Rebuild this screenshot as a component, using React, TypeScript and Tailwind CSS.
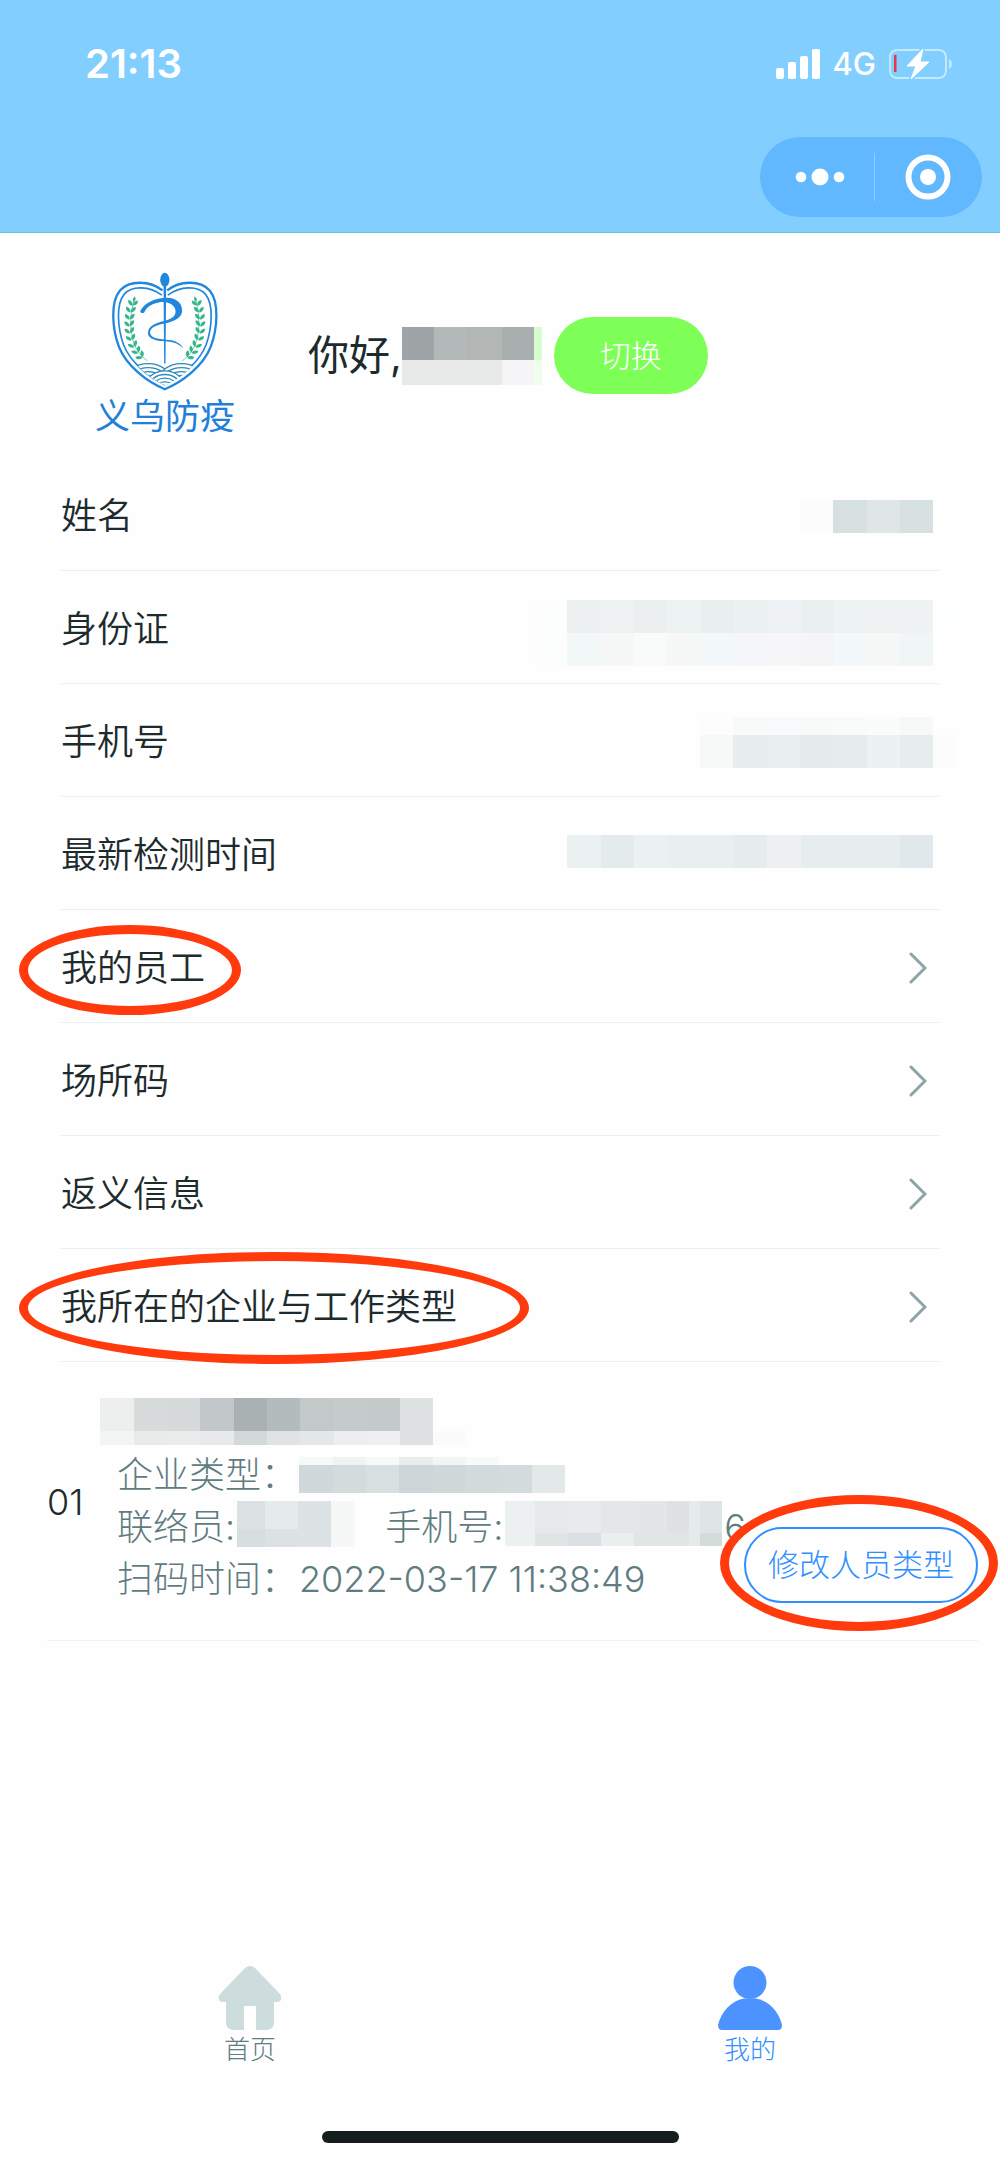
import { ReactNode } from "react"

type MosaicRowType = {
  height: string,
  cells: string[],
}

type InfoItemType = {
  label: string,
  value: MosaicRowType[],
}

type LinkItemType = {
  label: string,
  href: string,
  circle?: string,
}

// each cell is "width color" so that uneven blocks can be written too
const greetingMosaic: MosaicRowType[] = [
  { height: "h-[33px]", cells: ["w-8 bg-[#9fa5a6]", "w-8 bg-[#b3b9b9]", "w-9 bg-[#b2b7b6]", "w-8 bg-[#a9aeaf]", "w-2 bg-[#d7fcd0]"] },
  { height: "h-[25px]", cells: ["w-8 bg-[#e7e8e8]", "w-8 bg-[#e8e9e9]", "w-9 bg-[#e8e9e9]", "w-8 bg-[#f5f5f7]", "w-2 bg-[#efffec]"] },
]

const infoItems: InfoItemType[] = [
  {
    label: "姓名",
    value: [
      { height: "h-[33px]", cells: ["w-[33px] bg-[#fcfcfc]", "w-[34px] bg-[#d7e0e1]", "w-[33px] bg-[#dfe6e5]", "w-[33px] bg-[#d8e1e2]", "w-[33px] bg-[#fdfefd]"] },
    ],
  },
  {
    label: "身份证",
    value: [
      { height: "h-2", cells: ["w-[33px] bg-white", "w-[366px] bg-[#fefefe]", "w-[33px] bg-white"] },
      { height: "h-[33px]", cells: ["w-[33px] bg-[#fcfefd]", "w-[34px] bg-[#ecf0f1]", "w-[33px] bg-[#eef2f2]", "w-[33px] bg-[#ebeff0]", "w-[34px] bg-[#edf2f2]", "w-[33px] bg-[#e9efef]", "w-[33px] bg-[#ebf1f1]", "w-[34px] bg-[#eff2f4]", "w-[33px] bg-[#eaf0f0]", "w-[33px] bg-[#edf2f3]", "w-[33px] bg-[#eff2f3]", "w-[33px] bg-[#eef2f3]", "w-[33px] bg-[#fdfefe]"] },
      { height: "h-[33px]", cells: ["w-[33px] bg-[#fcfefd]", "w-[34px] bg-[#f2f7f8]", "w-[33px] bg-[#f6f8f7]", "w-[33px] bg-[#f9fbfa]", "w-[34px] bg-[#f6f8f7]", "w-[33px] bg-[#f3f8fa]", "w-[33px] bg-[#f5f6f9]", "w-[34px] bg-[#f7f7fa]", "w-[33px] bg-[#f5f5f8]", "w-[33px] bg-[#f3f8fa]", "w-[33px] bg-[#f6f8f8]", "w-[33px] bg-[#f0f5f6]", "w-[33px] bg-[#fefefe]"] },
    ],
  },
  {
    label: "手机号",
    value: [
      { height: "h-[18px]", cells: ["w-[33px] bg-[#fdfdfd]", "w-[34px] bg-[#f8faf9]", "w-[33px] bg-[#f9fafd]", "w-[33px] bg-[#f8f9f9]", "w-[34px] bg-[#f9fbfa]", "w-[33px] bg-[#fafcfb]", "w-[33px] bg-[#f7f9f8]", "w-[33px] bg-[#fefefe]"] },
      { height: "h-[33px]", cells: ["w-[33px] bg-[#f7f9f8]", "w-[34px] bg-[#e7eded]", "w-[33px] bg-[#e9eeee]", "w-[33px] bg-[#e5ebeb]", "w-[34px] bg-[#e6ecec]", "w-[33px] bg-[#ecf1f2]", "w-[33px] bg-[#e7eded]", "w-[22px] bg-[#fafdfc]", "w-[11px] bg-[#fefefe]"] },
    ],
  },
  {
    label: "最新检测时间",
    value: [
      { height: "h-[33px]", cells: ["w-[34px] bg-[#ebf1f1]", "w-[33px] bg-[#e3ecea]", "w-[33px] bg-[#ebf1f1]", "w-[34px] bg-[#e9efef]", "w-[33px] bg-[#e9efef]", "w-[33px] bg-[#e6eced]", "w-[34px] bg-[#edf1f2]", "w-[33px] bg-[#e7edee]", "w-[33px] bg-[#e6edec]", "w-[33px] bg-[#e7edee]", "w-[33px] bg-[#e0e8eb]", "w-[33px] bg-[#fefefe]"] },
      { height: "h-2", cells: ["w-[366px] bg-[#fefefe]", "w-[33px] bg-[#fefefe]"] },
    ],
  },
]

const linkItems: LinkItemType[] = [
  { label: "我的员工", href: "#staff", circle: "-left-[42px] -right-9 -top-4 -bottom-5" },
  { label: "场所码", href: "#place" },
  { label: "返义信息", href: "#return" },
  { label: "我所在的企业与工作类型", href: "#company", circle: "-left-[42px] -right-[72px] -top-7 -bottom-[30px]" },
]

const companyMosaic: MosaicRowType[] = [
  { height: "h-[33px]", cells: ["w-[34px] bg-[#edefee]", "w-[33px] bg-[#d8dbdb]", "w-[33px] bg-[#d5d9d9]", "w-[34px] bg-[#c2c8ca]", "w-[33px] bg-[#a9b1b3]", "w-[33px] bg-[#b3bbbd]", "w-[34px] bg-[#c2c9c8]", "w-[33px] bg-[#c4cbca]", "w-[33px] bg-[#c3cac9]", "w-[33px] bg-[#dee2e3]"] },
  { height: "h-[14px]", cells: ["w-[34px] bg-[#f3f4f4]", "w-[33px] bg-[#e9ebeb]", "w-[33px] bg-[#eaebeb]", "w-[34px] bg-[#e7e9ea]", "w-[33px] bg-[#d3d8d9]", "w-[33px] bg-[#dfe3e4]", "w-[34px] bg-[#e3e7e7]", "w-[33px] bg-[#eceeef]", "w-[33px] bg-[#eff0f1]", "w-[33px] bg-[#dee2e3]", "w-[33px] bg-[#fafbfb]"] },
]

const typeMosaic: MosaicRowType[] = [
  { height: "h-2", cells: ["w-[34px] bg-[#f7f8f8]", "w-[33px] bg-[#f1f3f3]", "w-[33px] bg-[#f7f8f8]", "w-[34px] bg-[#e9edee]", "w-[33px] bg-[#f3f5f5]", "w-[33px] bg-[#f8f9f9]"] },
  { height: "h-7", cells: ["w-[34px] bg-[#cfd8da]", "w-[33px] bg-[#d3dbdc]", "w-[33px] bg-[#d8dfe0]", "w-[34px] bg-[#cdd7d9]", "w-[33px] bg-[#d0d9da]", "w-[33px] bg-[#d2dadb]", "w-[33px] bg-[#d3dbdd]", "w-[33px] bg-[#e3e8e8]"] },
]

const contactMosaic: MosaicRowType[] = [
  { height: "h-7", cells: ["w-7 bg-[#dce2e4]", "w-[33px] bg-[#e5eaea]", "w-[33px] bg-[#dde3e5]", "w-6 bg-[#f6f8f8]"] },
  { height: "h-[18px]", cells: ["w-7 bg-[#d7dee0]", "w-[33px] bg-[#dce2e4]", "w-[33px] bg-[#dde3e5]", "w-6 bg-[#f6f8f8]"] },
]

const phoneMosaic: MosaicRowType[] = [
  { height: "h-8", cells: ["w-[30px] bg-[#edf0f1]", "w-[33px] bg-[#e5e9ea]", "w-[33px] bg-[#e7ebeb]", "w-[33px] bg-[#e3e7e8]", "w-[33px] bg-[#e2e6e7]", "w-[22px] bg-[#dee2e5]", "w-[11px] bg-[#e7eaeb]", "w-[22px] bg-[#dfe5e5]"] },
  { height: "h-[13px]", cells: ["w-[30px] bg-[#edf0f1]", "w-[33px] bg-[#dfe4e4]", "w-[33px] bg-[#dbe0e3]", "w-[33px] bg-[#e9eeee]", "w-[33px] bg-[#e0e5e5]", "w-[22px] bg-[#e0e5e5]", "w-[11px] bg-[#e7eaeb]", "w-[22px] bg-[#d3dbdb]"] },
]

const Mosaic = ({ rows, className = "" }: { rows: MosaicRowType[], className?: string }) => {
  return (
    <div className={`shrink-0 ${className}`} aria-hidden="true">
      {rows.map((row, i) => (
        <div key={i} className={`flex ${row.height}`}>
          {row.cells.map((cell, j) => (
            <div key={j} className={`shrink-0 ${cell}`} />
          ))}
        </div>
      ))}
    </div>
  )
}

const Circle = ({ position }: { position: string }) => {
  return <span className={`pointer-events-none absolute rounded-[50%] border-[9px] border-[#ff3a0c] ${position}`} />
}

const StatusBar = () => {
  return (
    <div className="flex items-center justify-between pl-[85px] pr-[46px] pt-10 text-white">
      <time className="text-[40px] leading-12 font-semibold">21:13</time>
      <div className="flex items-center">
        <svg className="w-11 h-[30px]" viewBox="0 0 44 30" fill="currentColor">
          <rect x="0" y="19" width="8" height="11" rx="2" />
          <rect x="12" y="13" width="8" height="17" rx="2" />
          <rect x="24" y="7" width="8" height="23" rx="2" />
          <rect x="36" y="0" width="8" height="30" rx="2" />
        </svg>
        <span className="ml-3 text-[31px] leading-10 font-medium">4G</span>
        <svg className="ml-3 w-[66px] h-8" viewBox="0 0 66 32" fill="none">
          <rect x="2" y="2" width="56" height="28" rx="7" stroke="#bfeaff" strokeWidth="2" />
          <path d="M61 11c4 1.500 4 8.500 0 10z" fill="#bfeaff" />
          <rect x="6" y="7" width="2.500" height="17" fill="#f0323c" />
          <path d="M35 1 19 18h9l-5 13 18-17h-9l3-13z" fill="#82cfff" stroke="#82cfff" strokeWidth="4" strokeLinejoin="round" />
          <path d="M35 1 19 18h9l-5 13 18-17h-9l3-13z" fill="#fff" stroke="#fff" strokeWidth="1" strokeLinejoin="round" />
        </svg>
      </div>
    </div>
  )
}

const Capsule = () => {
  return (
    <div className="mt-[49px] mr-[18px] ml-auto flex h-20 w-[222px] items-center rounded-full bg-[#61b8ff]">
      <button type="button" aria-label="更多" className="flex flex-1 items-center justify-center pl-1.5">
        <svg className="w-[50px] h-[18px]" viewBox="0 0 50 18" fill="#fff">
          <circle cx="6" cy="9" r="5.300" />
          <circle cx="25" cy="9" r="8.500" />
          <circle cx="44" cy="9" r="5.300" />
        </svg>
      </button>
      <span className="h-12 w-px bg-[#8fceff]" />
      <button type="button" aria-label="关闭" className="flex flex-1 items-center justify-center">
        <svg className="w-[46px] h-[46px]" viewBox="0 0 46 46" fill="none">
          <circle cx="23" cy="23" r="19.500" stroke="#fff" strokeWidth="6" />
          <circle cx="23" cy="23" r="8" fill="#fff" />
        </svg>
      </button>
    </div>
  )
}

// leaf pairs along the left branch: x, y, rotation
const leaves = [
  [215, 160, 12],
  [209, 180, 8],
  [206, 201, 4],
  [205, 222, 0],
  [206, 243, -6],
  [210, 264, -12],
  [217, 285, -20],
  [228, 303, -30],
  [240, 318, -42],
]

const Branch = () => {
  return (
    <g>
      <path d="M221 142C204 200 198 290 260 332" stroke="#35b58a" strokeWidth="2" fill="none" />
      {leaves.map(([x, y, r], i) => (
        <g key={i} transform={`translate(${x} ${y}) rotate(${r})`} fill="#35b58a">
          <path d="M0 7C-14 5-16-5-14-9C-6-8 1-3 0 7z" />
          <path d="M1 5C0-5 6-11 14-12C16-3 11 4 1 5z" />
        </g>
      ))}
      <path d="M217 154C214 146 217 141 222 138C226 146 224 151 217 154z" fill="#35b58a" />
    </g>
  )
}

const HalfShield = () => {
  return (
    <g fill="none" stroke="#2187dc">
      <path d="M305 120C268 90 206 88 177 120C147 156 154 236 174 290C196 346 258 396 314 418" strokeWidth="7" />
      <path d="M303 134C266 107 214 104 190 131C164 162 170 234 188 284C208 334 262 382 314 404" strokeWidth="5" />
    </g>
  )
}

const Logo = () => {
  return (
    <svg className="w-[108px] h-[121px]" viewBox="150 62 325 363" role="img" aria-label="义乌防疫">
      <defs>
        <clipPath id="shield">
          <path d="M170 200C172 234 178 260 188 284C208 334 262 382 314 404C368 382 416 334 436 284C446 260 452 234 454 200z" />
        </clipPath>
      </defs>
      <HalfShield />
      <g transform="translate(624 0) scale(-1 1)">
        <HalfShield />
      </g>
      <Branch />
      <g transform="translate(624 0) scale(-1 1)">
        <Branch />
      </g>
      <g clipPath="url(#shield)" stroke="#2c8cb8" strokeWidth="4">
        {[262, 362].map((cx) => (
          [58, 46, 34, 22].map((r) => (
            <ellipse key={`${cx}-${r}`} cx={cx} cy="394" rx={r + 12} ry={r - 4} fill="#fff" />
          ))
        ))}
        {[54, 43, 32, 21, 10].map((r) => (
          <ellipse key={r} cx="312" cy="410" rx={r + 4} ry={r - 6} fill="#fff" />
        ))}
      </g>
      <ellipse cx="312" cy="88" rx="14" ry="21" fill="#2187dc" />
      <path d="M308 100h8l-2 240h-4z" fill="#2187dc" />
      <path
        d="M238 182C250 158 282 142 318 142C352 142 366 164 364 184C360 208 330 216 300 222C272 229 266 240 268 250C274 268 312 266 332 270C350 274 362 284 368 294C352 280 342 276 326 274C298 272 264 272 261 248C262 224 288 218 312 211C334 205 346 196 344 180C341 160 316 152 294 156C268 161 256 172 250 186C244 190 238 188 238 182z"
        fill="#2187dc"
      />
    </svg>
  )
}

const Field = ({ children }: { children: ReactNode }) => {
  return <div className="flex h-[52px] items-center gap-0.5 pl-[17px] text-[36px] font-light whitespace-nowrap text-[#5f7c80]">{children}</div>
}

const App = () => {
  return (
    <div className="flex min-h-screen flex-col bg-[#fefefe] font-['Inter','Noto_Sans_CJK_SC',sans-serif] text-[#1d2b2d]">
      <header className="border-b border-[#74bdd8] bg-[#82cfff] pb-[15px]">
        <StatusBar />
        <Capsule />
      </header>

      <main>
        <section className="flex items-center pt-[38px] pb-[18px] pl-[95px]">
          <div className="flex flex-col items-center">
            <Logo />
            <p className="text-[35px] leading-12 text-[#2280d8]">义乌防疫</p>
          </div>
          <h1 className="ml-[73px] text-[41px]">你好,</h1>
          <Mosaic rows={greetingMosaic} />
          <button type="button" className="ml-3 rounded-full bg-[#7eff57] px-[46px] py-[15px] text-[31px] leading-[47px] font-light text-white">
            切换
          </button>
        </section>

        <section className="mx-[61px] text-[36px] leading-[54px] font-[350]">
          {infoItems.map((item) => (
            <div key={item.label} className="flex h-[113px] items-center justify-between border-b border-[#e8f0f2] pt-1">
              <span>{item.label}</span>
              {/* faint edge of the block runs past the divider */}
              <div className="-mr-[27px]">
                <Mosaic rows={item.value} />
              </div>
            </div>
          ))}
          {linkItems.map((item) => (
            <a key={item.label} href={item.href} className="flex h-[113px] items-center justify-between border-b border-[#e8f0f2] pt-1">
              <span className="relative">
                {item.label}
                {item.circle && <Circle position={item.circle} />}
              </span>
              <svg className="mr-3 w-[18px] h-8" viewBox="0 0 18 32" fill="none" stroke="#8aa5a8" strokeWidth="3" strokeLinecap="round">
                <path d="M2 2l14 14L2 30" />
              </svg>
            </a>
          ))}
        </section>

        <section className="mr-[22px] ml-[47px] flex items-center border-b border-[#eef4f4] pt-9 pb-[35px]">
          <span className="w-[53px] text-[36px] font-light">01</span>
          <div className="min-w-0 flex-1">
            <Mosaic rows={companyMosaic} />
            <div className="mt-1">
              <Field>
                企业类型：
                <Mosaic rows={typeMosaic} />
              </Field>
              <Field>
                联络员:
                <Mosaic rows={contactMosaic} className="self-start" />
                <span className="ml-7">手机号:</span>
                <Mosaic rows={phoneMosaic} className="self-start" />
                6
              </Field>
              <Field>
                扫码时间：
                <time>2022-03-17 11:38:49</time>
              </Field>
            </div>
          </div>
          <div className="relative mb-0.5 shrink-0 self-end">
            <button type="button" className="block rounded-full border-2 border-[#2f8fff] px-[22px] py-3 text-[31px] leading-12 font-light text-[#2f8fff]">
              修改人员类型
            </button>
            <Circle position="-left-6 -right-5 -top-8 -bottom-7" />
          </div>
        </section>
      </main>

      <nav className="mt-auto grid grid-cols-2 text-[26px] leading-10 font-light">
        <a href="#home" className="flex flex-col items-center text-[#5f7c80]">
          <svg className="w-16 h-16" viewBox="0 0 64 64" fill="#cddddd">
            <path d="M27 2Q32-2 37 2L62 28Q64 31 63 34Q62 36 59 36H56V56Q56 64 48 64H38V40H26V64H16Q8 64 8 56V36H5Q2 36 1 34Q0 31 2 28z" />
          </svg>
          首页
        </a>
        <a href="#mine" className="flex flex-col items-center text-[#2f8fff]">
          <svg className="w-16 h-16" viewBox="0 0 64 64" fill="#4c93ff">
            <circle cx="32" cy="16.500" r="16.500" />
            <path d="M26 32.500H38C51 35 61 46 64 59Q64 64 60 64H4Q0 64 0 59C3 46 13 35 26 32.500z" />
          </svg>
          我的
        </a>
      </nav>
      <div className="mx-auto mt-[61px] mb-[21px] h-3 w-[357px] rounded-full bg-[#161d1d]" />
    </div>
  )
}

export default App
